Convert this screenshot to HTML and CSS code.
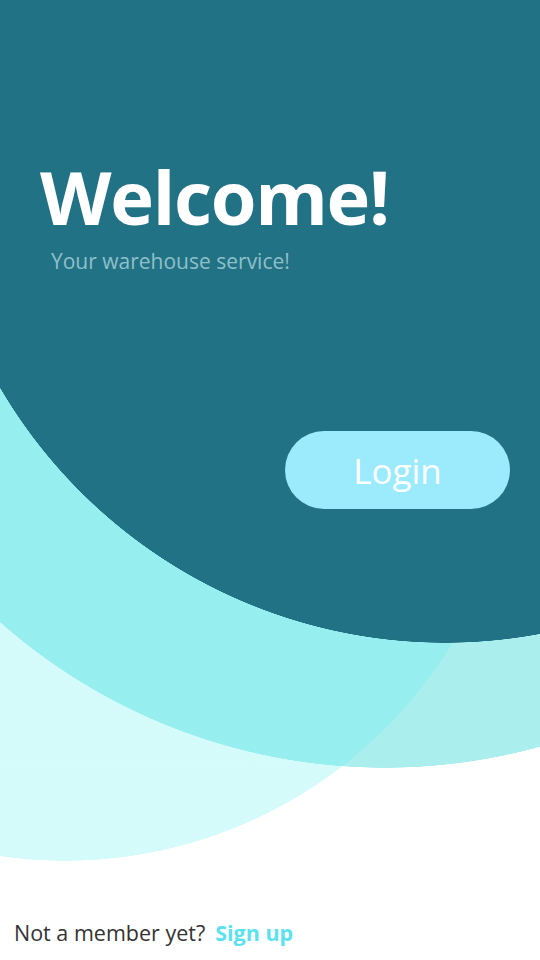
FILE: index.html
```html
<!DOCTYPE html>
<html lang="en">
<head>
<meta charset="utf-8">
<title>Welcome</title>
<link rel="stylesheet" href="styles.css">
</head>
<body>
<main class="screen">
  <header class="hero">
    <h1 class="title">Welcome!</h1>
    <p class="subtitle">Your warehouse service!</p>
  </header>
  <div class="actions">
    <button class="login-btn" type="button">Login</button>
  </div>
  <footer class="signup">
    <span class="signup-text">Not a member yet?</span>
    <a class="signup-link" href="#">Sign up</a>
  </footer>
</main>
</body>
</html>
```
FILE: styles.css
```css
html, body {
  margin: 0;
  padding: 0;
  background: #ffffff;
}

.screen {
  width: 540px;
  height: 960px;
  overflow: hidden;
  display: flex;
  flex-direction: column;
  font-family: "Open Sans", "Noto Sans", sans-serif;
  background:
    radial-gradient(circle 516px at 445px 127px, #227285 515.5px, rgba(34,114,133,0) 516px),
    radial-gradient(circle 454px at 65px 407px, rgba(91,239,239,0.26) 453.5px, rgba(91,239,239,0) 454px),
    radial-gradient(circle 582px at 385px 186px, #abeeee 581.5px, rgba(171,238,238,0) 582px),
    #ffffff;
}

.hero {
  padding: 155px 0 0 40px;
}

.title {
  margin: 0;
  font-size: 74px;
  font-weight: 700;
  line-height: 84px;
  color: #ffffff;
  letter-spacing: -1.3px;
}

.subtitle {
  margin: 8px 0 0 11px;
  font-size: 21px;
  line-height: 28px;
  color: #8fc0c9;
}

.actions {
  display: flex;
  justify-content: flex-end;
  padding: 156px 30px 0 0;
}

.login-btn {
  width: 225px;
  height: 78px;
  border: none;
  border-radius: 39px;
  background: #9cebfd;
  color: #ffffff;
  font-family: "Open Sans", "Noto Sans", sans-serif;
  font-size: 35px;
  font-weight: 400;
  padding: 0;
}

.signup {
  margin-top: auto;
  padding: 0 0 12px 14px;
  display: flex;
  align-items: baseline;
  gap: 10px;
  font-size: 21.5px;
  line-height: 30px;
}

.signup-text {
  color: #333333;
}

.signup-link {
  color: #5ce1ee;
  font-weight: 700;
  text-decoration: none;
}
```
